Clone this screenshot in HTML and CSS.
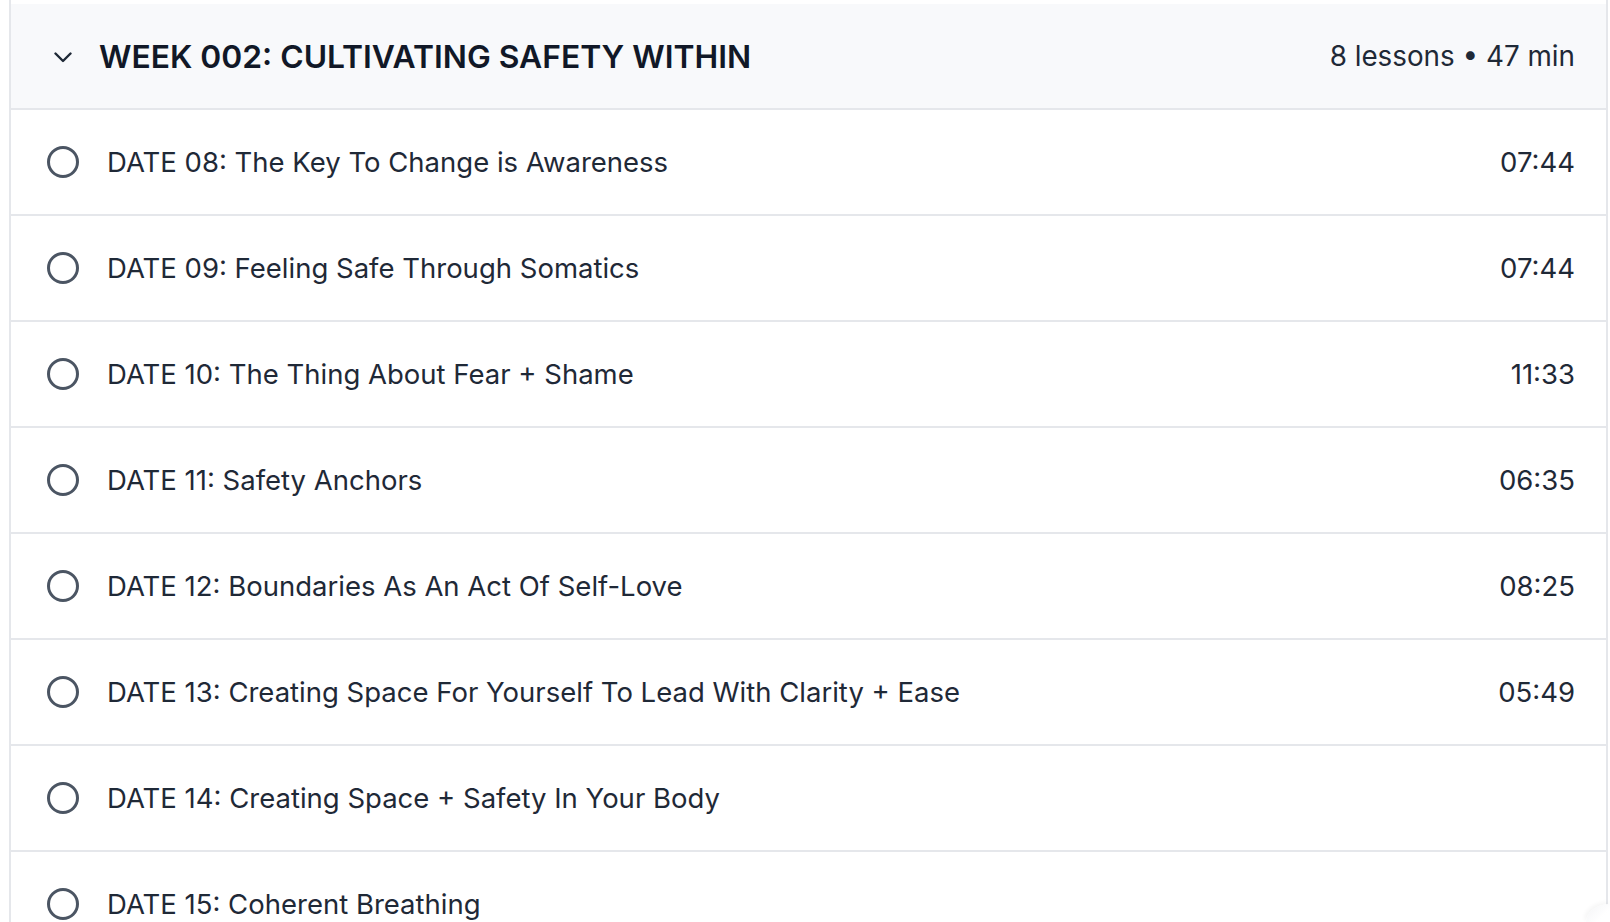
FILE: index.html
```html
<!DOCTYPE html>
<html lang="en">
<head>
<meta charset="utf-8">
<title>Week 002</title>
<link rel="stylesheet" href="styles.css">
</head>
<body>
<div class="page">
  <section class="module">
    <div class="module-top"></div>
    <header class="module-head">
      <span class="chev">
        <svg width="18" height="11" viewBox="0 0 18 11"><path d="M1.5 1.5 L9 9 L16.5 1.5" fill="none" stroke="#1f2937" stroke-width="2.4" stroke-linecap="round" stroke-linejoin="round"/></svg>
      </span>
      <h2 class="module-title">WEEK 002: CULTIVATING SAFETY WITHIN</h2>
      <span class="module-meta">8 lessons • 47 min</span>
    </header>
    <ul class="lessons">
      <li class="lesson"><span class="dot"></span><span class="lesson-title">DATE 08: The Key To Change is Awareness</span><span class="lesson-time">07:44</span></li>
      <li class="lesson"><span class="dot"></span><span class="lesson-title">DATE 09: Feeling Safe Through Somatics</span><span class="lesson-time">07:44</span></li>
      <li class="lesson"><span class="dot"></span><span class="lesson-title">DATE 10: The Thing About Fear + Shame</span><span class="lesson-time">11:33</span></li>
      <li class="lesson"><span class="dot"></span><span class="lesson-title">DATE 11: Safety Anchors</span><span class="lesson-time">06:35</span></li>
      <li class="lesson"><span class="dot"></span><span class="lesson-title">DATE 12: Boundaries As An Act Of Self-Love</span><span class="lesson-time">08:25</span></li>
      <li class="lesson"><span class="dot"></span><span class="lesson-title">DATE 13: Creating Space For Yourself To Lead With Clarity + Ease</span><span class="lesson-time">05:49</span></li>
      <li class="lesson"><span class="dot"></span><span class="lesson-title">DATE 14: Creating Space + Safety In Your Body</span><span class="lesson-time"></span></li>
      <li class="lesson"><span class="dot"></span><span class="lesson-title">DATE 15: Coherent Breathing</span><span class="lesson-time"></span></li>
    </ul>
  </section>
  <div class="corner"></div>
</div>
</body>
</html>
```

FILE: styles.css
```css
* { box-sizing: border-box; }
html, body {
  margin: 0;
  padding: 0;
  background: #ffffff;
  overflow: hidden;
  height: 922px;
}
body {
  font-family: Inter, "Noto Sans", "Liberation Sans", sans-serif;
  color: #1f2937;
}
.page {
  position: relative;
  width: 1610px;
  height: 922px;
  overflow: hidden;
}
.module {
  margin-left: 9px;
  width: 1599px;
  border-left: 2px solid #e5e7eb;
  border-right: 2px solid #e5e7eb;
  background: #ffffff;
}
.module-top {
  height: 4px;
  background: #ffffff;
}
.module-head {
  display: flex;
  align-items: center;
  height: 106px;
  padding: 0 31px 0 36px;
  background: #f8f9fb;
  border-bottom: 2px solid #e5e7eb;
}
.chev {
  width: 32px;
  display: flex;
  justify-content: center;
  align-items: center;
  margin-top: 2px;
}
.module-title {
  margin: 0 0 0 20px;
  flex: 1;
  font-size: 31.8px;
  font-weight: 600;
  color: #111827;
  letter-spacing: 0;
}
.module-meta {
  font-size: 27.8px;
  color: #1f2937;
}
.lessons {
  list-style: none;
  margin: 0;
  padding: 0;
}
.lesson {
  display: flex;
  align-items: center;
  height: 106px;
  padding: 0 31px 0 36px;
  border-bottom: 2px solid #e5e7eb;
}
.dot {
  width: 32px;
  height: 32px;
  flex: none;
  border: 3px solid #4b5563;
  border-radius: 50%;
}
.lesson-title {
  flex: 1;
  margin-left: 28px;
  font-size: 27.5px;
  color: #1f2937;
}
.lesson-time {
  font-size: 27.5px;
  color: #1f2937;
}
.corner {
  position: absolute;
  right: 0;
  bottom: 0;
  width: 24px;
  height: 18px;
  border-top-left-radius: 24px 18px;
  background: linear-gradient(135deg, #f3f4f6, #ffffff 70%);
  box-shadow: -2px -2px 4px rgba(0,0,0,0.04);
}
```
